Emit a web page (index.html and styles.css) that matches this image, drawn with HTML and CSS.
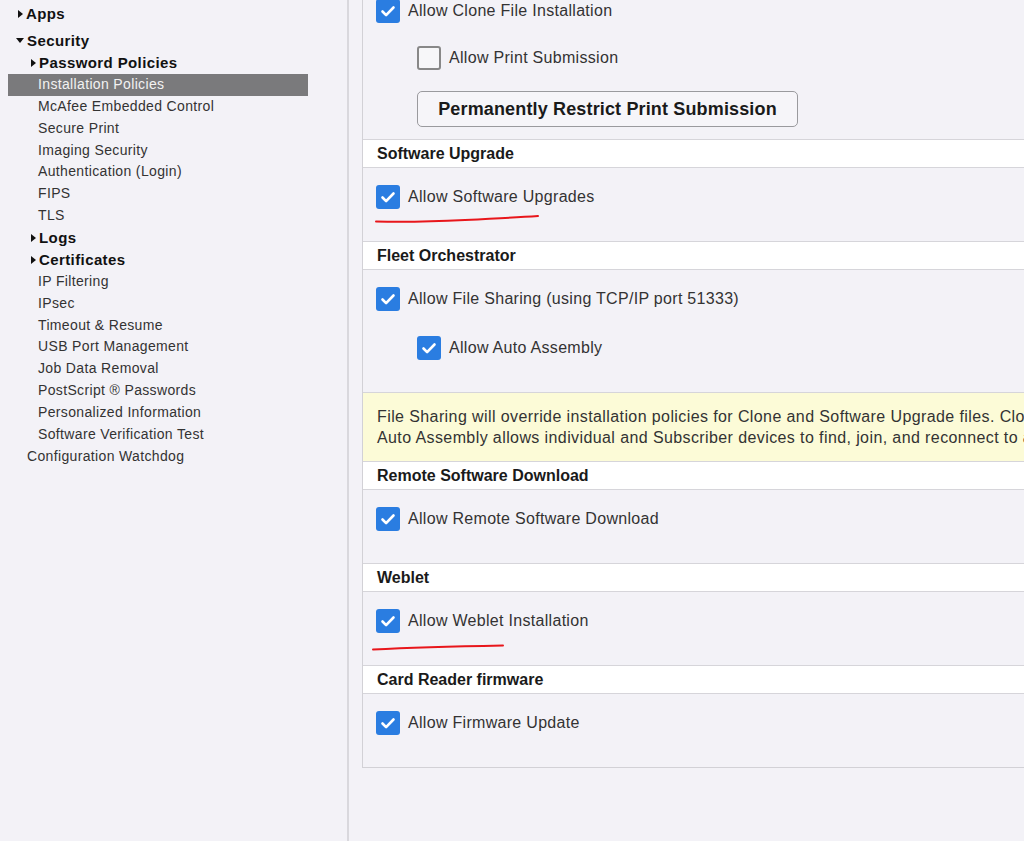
FILE: index.html
```html
<!DOCTYPE html>
<html lang="en">
<head>
    <meta charset="UTF-8">
    <meta name="viewport" content="width=device-width, initial-scale=1.0">
    <title>Installation Policies</title>
    <link rel="stylesheet" href="styles.css">
</head>
<body>
    <div class="page">
        <div class="side">
            <div class="item top closed">Apps</div>
            <div class="item top open sec">Security</div>
            <div class="item parent closed">Password Policies</div>
            <div class="item sub active">Installation Policies</div>
            <div class="item sub">McAfee Embedded Control</div>
            <div class="item sub">Secure Print</div>
            <div class="item sub">Imaging Security</div>
            <div class="item sub">Authentication (Login)</div>
            <div class="item sub">FIPS</div>
            <div class="item sub">TLS</div>
            <div class="item parent closed">Logs</div>
            <div class="item parent closed">Certificates</div>
            <div class="item sub">IP Filtering</div>
            <div class="item sub">IPsec</div>
            <div class="item sub">Timeout &amp; Resume</div>
            <div class="item sub">USB Port Management</div>
            <div class="item sub">Job Data Removal</div>
            <div class="item sub">PostScript ® Passwords</div>
            <div class="item sub">Personalized Information</div>
            <div class="item sub">Software Verification Test</div>
            <div class="item root">Configuration Watchdog</div>
        </div>

        <div class="main">
            <div class="panel">
                <div class="group install">
                    <label class="row"><span class="box on"></span>Allow Clone File Installation</label>
                    <label class="row indent"><span class="box"></span>Allow Print Submission</label>
                    <button class="restrict">Permanently Restrict Print Submission</button>
                </div>

                <div class="head">Software Upgrade</div>
                <div class="group">
                    <label class="row"><span class="box on"></span>Allow Software Upgrades
                        <svg class="mark mark-a" width="166" height="10" viewBox="0 0 166 10"><path d="M1 7.5 Q 40 8.5 90 6 T 163 2" fill="none" stroke="#e8161b" stroke-width="2" stroke-linecap="round"/></svg>
                    </label>
                </div>

                <div class="head">Fleet Orchestrator</div>
                <div class="group">
                    <label class="row"><span class="box on"></span>Allow File Sharing (using TCP/IP port 51333)</label>
                    <label class="row indent"><span class="box on"></span>Allow Auto Assembly</label>
                </div>

                <div class="notice">
                    File Sharing will override installation policies for Clone and Software Upgrade files. Clone files shared by the Fleet Orchestrator are always installed.<br>
                    Auto Assembly allows individual and Subscriber devices to find, join, and reconnect to a Fleet Orchestrator group.
                </div>

                <div class="head">Remote Software Download</div>
                <div class="group">
                    <label class="row"><span class="box on"></span>Allow Remote Software Download</label>
                </div>

                <div class="head">Weblet</div>
                <div class="group">
                    <label class="row"><span class="box on"></span>Allow Weblet Installation
                        <svg class="mark mark-b" width="134" height="9" viewBox="0 0 134 9"><path d="M1 6.5 Q 50 4 131 2.5" fill="none" stroke="#e8161b" stroke-width="2" stroke-linecap="round"/></svg>
                    </label>
                </div>

                <div class="head">Card Reader firmware</div>
                <div class="group">
                    <label class="row"><span class="box on"></span>Allow Firmware Update</label>
                </div>
            </div>
        </div>
    </div>
</body>
</html>
```

FILE: styles.css
```css
body, html {
    margin: 0;
    height: 100%;
    overflow: hidden;
    background-color: #f3f2f7;
    font-family: "Liberation Sans", Arial, sans-serif;
    color: #333;
}
.page {
    display: flex;
    height: 841px;
}
.side {
    width: 349px;
    flex: none;
    box-sizing: border-box;
    border-right: 2px solid #d9d8dd;
    padding: 3px 0 0 8px;
}
.item {
    width: 300px;
    box-sizing: border-box;
    font-size: 14px;
    line-height: 21.85px;
    letter-spacing: 0.35px;
    color: #333;
    white-space: nowrap;
}
.item.top {
    padding-left: 10px;
    font-size: 15px;
    font-weight: bold;
    line-height: 22px;
    letter-spacing: 0.4px;
    color: #111;
}
.item.sec {
    margin-top: 5px;
    padding-left: 8px;
}
.item.parent {
    padding-left: 23px;
    font-size: 15px;
    font-weight: bold;
    line-height: 22px;
    letter-spacing: 0.4px;
    color: #111;
}
.item.sub {
    padding-left: 30px;
}
.item.root {
    padding-left: 19px;
}
.item.active {
    background-color: #7a7a7c;
    color: #f2f2f2;
}
.closed::before {
    content: "";
    display: inline-block;
    vertical-align: 1px;
    margin-right: 3px;
    border-left: 5px solid #111;
    border-top: 4.5px solid transparent;
    border-bottom: 4.5px solid transparent;
}
.open::before {
    content: "";
    display: inline-block;
    vertical-align: 3px;
    margin-right: 3px;
    border-top: 5px solid #111;
    border-left: 4.5px solid transparent;
    border-right: 4.5px solid transparent;
}
.main {
    flex: 1;
    padding-left: 13px;
    margin-top: -17px;
}
.panel {
    width: 780px;
    border-left: 1px solid #d2d1d6;
    border-bottom: 1px solid #d2d1d6;
}
.group {
    padding: 17px 0 32px 13px;
    display: flex;
    flex-direction: column;
    gap: 25px;
    align-items: flex-start;
}
.group.install {
    gap: 0;
    padding-top: 16px;
    padding-bottom: 12px;
}
.group.install .indent {
    margin-top: 23px;
}
.row {
    position: relative;
    display: flex;
    align-items: center;
    height: 24px;
    font-size: 16px;
    letter-spacing: 0.3px;
    color: #333;
    white-space: nowrap;
}
.row.indent {
    margin-left: 41px;
}
.box {
    width: 24px;
    height: 24px;
    flex: none;
    box-sizing: border-box;
    margin-right: 8px;
    border-radius: 3px;
    border: 2px solid #888;
    background-color: #f7f7f9;
}
.box.on {
    border: none;
    background-color: #2a7de1;
    background-image: url("data:image/svg+xml,%3Csvg xmlns='http://www.w3.org/2000/svg' viewBox='0 0 24 24'%3E%3Cpath d='M6.5 12.5l3.6 3.6 7.4-7.6' fill='none' stroke='%23fff' stroke-width='2.6' stroke-linecap='round' stroke-linejoin='round'/%3E%3C/svg%3E");
}
.restrict {
    margin: 21px 0 0 41px;
    width: 381px;
    height: 36px;
    border: 1.5px solid #9a9a9e;
    border-radius: 5px;
    background-color: #f6f5f9;
    font-family: "Liberation Sans", Arial, sans-serif;
    font-size: 18px;
    font-weight: bold;
    letter-spacing: 0.15px;
    color: #1a1a1a;
    padding: 0;
}
.head {
    background-color: #fff;
    border-top: 1px solid #d6d5da;
    border-bottom: 1px solid #d6d5da;
    height: 27px;
    line-height: 27px;
    padding-left: 14px;
    font-size: 16px;
    font-weight: bold;
    color: #1a1a1a;
    white-space: nowrap;
}
.notice {
    background-color: #fcfbd7;
    border-top: 1px solid #d6d5da;
    padding: 13px 0 13px 14px;
    font-size: 16px;
    line-height: 21px;
    letter-spacing: 0.4px;
    color: #333;
    white-space: nowrap;
    overflow: hidden;
}
.mark {
    position: absolute;
    pointer-events: none;
}
.mark-a {
    left: -1px;
    top: 29px;
}
.mark-b {
    left: -4px;
    top: 34px;
}
```
